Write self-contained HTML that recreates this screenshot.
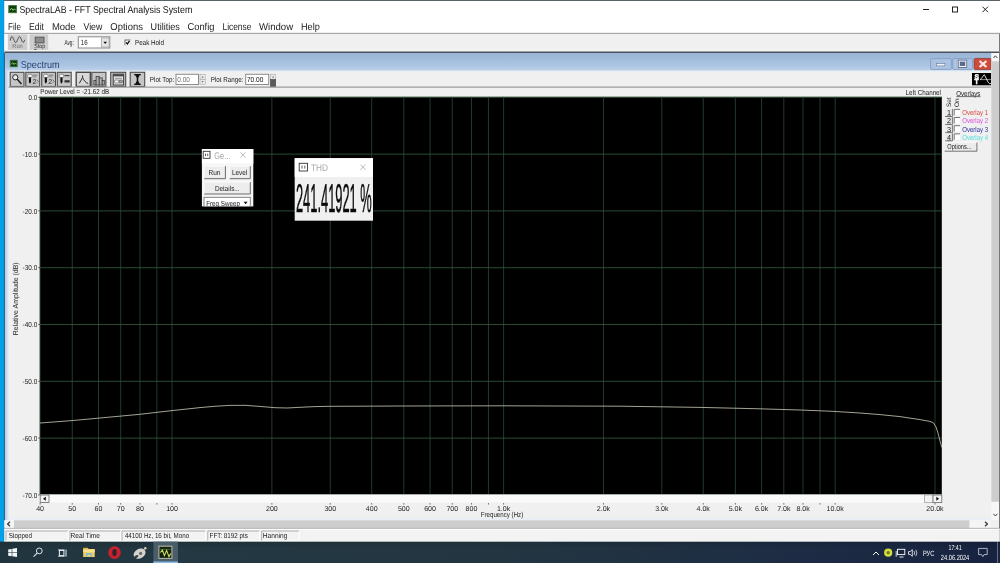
<!DOCTYPE html>
<html lang="en"><head><meta charset="utf-8"><title>SpectraLAB - FFT Spectral Analysis System</title>
<style>
html,body{margin:0;padding:0;background:#f0f0f0;overflow:hidden}
svg{display:block;will-change:transform;font-family:'Liberation Sans', sans-serif;}
text{white-space:pre;text-rendering:geometricPrecision}
</style></head><body>
<svg width="1000" height="563" viewBox="0 0 1000 563" font-family="Liberation Sans, sans-serif">
<defs>
<linearGradient id="tb" x1="0" y1="0" x2="0" y2="1"><stop offset="0" stop-color="#9bb4d3"/><stop offset="0.3" stop-color="#a0badb"/><stop offset="0.7" stop-color="#acc5e3"/><stop offset="1" stop-color="#bdd2ea"/></linearGradient>
<linearGradient id="task" x1="0" y1="0" x2="1" y2="0"><stop offset="0" stop-color="#21353f"/><stop offset="0.2" stop-color="#233842"/><stop offset="0.5" stop-color="#233541"/><stop offset="0.8" stop-color="#1d2c44"/><stop offset="1" stop-color="#172240"/></linearGradient>
<linearGradient id="taskv" x1="0" y1="0" x2="0" y2="1"><stop offset="0" stop-color="#000" stop-opacity="0.13"/><stop offset="0.35" stop-color="#000" stop-opacity="0"/></linearGradient>
</defs>
<rect x="0.00" y="0.00" width="1000.00" height="563.00" fill="#f0f0f0" />
<rect x="0.00" y="0.00" width="4.40" height="542.00" fill="#1583c4" />
<rect x="0.00" y="0.00" width="3.70" height="542.00" fill="#03a1e7" />
<rect x="4.50" y="0.00" width="995.50" height="33.00" fill="#ffffff" />
<line x1="4.00" y1="0.50" x2="1000.00" y2="0.50" stroke="#5a6468" stroke-width="1" />
<rect x="8.80" y="5.60" width="7.60" height="7.10" fill="#0e3a0e" stroke="#3f7a3a" stroke-width="1" />
<path d="M9.8 10.2 L11.6 8.2 L13 10.4 L14.4 8.8 L15.6 10.2" stroke="#9ee07a" fill="none" stroke-width="0.9" />
<text x="19.40" y="13.10" font-size="10" fill="#111" font-weight="normal" text-anchor="start" textLength="172.90" lengthAdjust="spacingAndGlyphs" >SpectraLAB - FFT Spectral Analysis System</text>
<line x1="923.00" y1="9.50" x2="929.00" y2="9.50" stroke="#222" stroke-width="1" />
<rect x="952.50" y="7.00" width="5.00" height="5.00" fill="none" stroke="#222" stroke-width="1" />
<path d="M982.5 6.7 L988 12.2 M988 6.7 L982.5 12.2" stroke="#222" fill="none" stroke-width="1" />
<text x="8.10" y="29.60" font-size="10" fill="#1a1a1a" font-weight="normal" text-anchor="start" textLength="12.90" lengthAdjust="spacingAndGlyphs" >File</text>
<text x="29.00" y="29.60" font-size="10" fill="#1a1a1a" font-weight="normal" text-anchor="start" textLength="15.00" lengthAdjust="spacingAndGlyphs" >Edit</text>
<text x="51.90" y="29.60" font-size="10" fill="#1a1a1a" font-weight="normal" text-anchor="start" textLength="23.70" lengthAdjust="spacingAndGlyphs" >Mode</text>
<text x="83.50" y="29.60" font-size="10" fill="#1a1a1a" font-weight="normal" text-anchor="start" textLength="18.80" lengthAdjust="spacingAndGlyphs" >View</text>
<text x="110.30" y="29.60" font-size="10" fill="#1a1a1a" font-weight="normal" text-anchor="start" textLength="32.60" lengthAdjust="spacingAndGlyphs" >Options</text>
<text x="150.60" y="29.60" font-size="10" fill="#1a1a1a" font-weight="normal" text-anchor="start" textLength="29.20" lengthAdjust="spacingAndGlyphs" >Utilities</text>
<text x="187.50" y="29.60" font-size="10" fill="#1a1a1a" font-weight="normal" text-anchor="start" textLength="26.90" lengthAdjust="spacingAndGlyphs" >Config</text>
<text x="222.50" y="29.60" font-size="10" fill="#1a1a1a" font-weight="normal" text-anchor="start" textLength="28.80" lengthAdjust="spacingAndGlyphs" >License</text>
<text x="259.00" y="29.60" font-size="10" fill="#1a1a1a" font-weight="normal" text-anchor="start" textLength="34.10" lengthAdjust="spacingAndGlyphs" >Window</text>
<text x="301.00" y="29.60" font-size="10" fill="#1a1a1a" font-weight="normal" text-anchor="start" textLength="18.80" lengthAdjust="spacingAndGlyphs" >Help</text>
<rect x="4.50" y="32.85" width="995.50" height="1.05" fill="#8c8c8c" />
<rect x="4.50" y="33.80" width="995.00" height="18.00" fill="#f0f0f0" />
<rect x="4.50" y="34.00" width="3.40" height="16.30" fill="#f9f9f9" />
<rect x="7.90" y="34.40" width="19.50" height="15.50" fill="#cdcdcd" />
<path d="M10.2 40.6 C10.8 38 11.2 36.6 11.9 36.6 C13.2 36.6 14.4 42.6 15.7 42.6 C17 42.6 18.3 36.6 19.6 36.6 C20.9 36.6 21.9 42.4 23 42.4 C23.8 42.4 24.3 41 24.8 39.8" stroke="#3a3a3a" fill="none" stroke-width="0.9" />
<text x="12.30" y="48.10" font-size="6" fill="#6e6e6e" font-weight="normal" text-anchor="start" textLength="10.40" lengthAdjust="spacingAndGlyphs" >Run</text>
<rect x="29.50" y="34.40" width="18.70" height="15.50" fill="#cdcdcd" />
<rect x="35.20" y="37.20" width="8.80" height="5.70" fill="#8c8c8c" stroke="#505050" stroke-width="0.9" />
<text x="34.20" y="48.20" font-size="6" fill="#2a2a2a" font-weight="normal" text-anchor="start" textLength="10.90" lengthAdjust="spacingAndGlyphs" >Stop</text>
<line x1="34.20" y1="49.40" x2="36.60" y2="49.40" stroke="#222" stroke-width="0.7" />
<rect x="4.50" y="50.30" width="995.00" height="1.00" fill="#f5f5f5" />
<text x="64.40" y="45.30" font-size="7.3" fill="#222" font-weight="normal" text-anchor="start" textLength="9.40" lengthAdjust="spacingAndGlyphs" >Avg:</text>
<rect x="78.30" y="36.80" width="31.50" height="11.20" fill="#ffffff" stroke="#8a8a8a" stroke-width="1" />
<text x="80.80" y="45.40" font-size="7.5" fill="#222" font-weight="normal" text-anchor="start" textLength="6.80" lengthAdjust="spacingAndGlyphs" >16</text>
<rect x="101.30" y="38.00" width="7.80" height="9.00" fill="#e6e6e6" stroke="#9a9a9a" stroke-width="0.7" />
<path d="M103.4 41.8 L107 41.8 L105.2 44 Z" stroke="none" fill="#111" stroke-width="1" />
<rect x="124.80" y="39.80" width="5.60" height="5.40" fill="#ffffff" />
<line x1="124.80" y1="40.00" x2="130.40" y2="40.00" stroke="#6a6a6a" stroke-width="1" />
<line x1="125.00" y1="39.80" x2="125.00" y2="45.20" stroke="#6a6a6a" stroke-width="1" />
<line x1="124.80" y1="45.10" x2="130.40" y2="45.10" stroke="#dcdcdc" stroke-width="0.6" />
<line x1="130.30" y1="39.80" x2="130.30" y2="45.20" stroke="#dcdcdc" stroke-width="0.6" />
<path d="M126.1 42.3 L127.4 43.9 L129.5 40.9" stroke="#0a0a0a" fill="none" stroke-width="1.25" />
<text x="135.00" y="45.30" font-size="7.3" fill="#222" font-weight="normal" text-anchor="start" textLength="29.00" lengthAdjust="spacingAndGlyphs" >Peak Hold</text>
<rect x="4.50" y="51.50" width="995.50" height="1.50" fill="#4a545c" />
<rect x="4.50" y="53.00" width="987.00" height="17.80" fill="url(#tb)" />
<rect x="4.50" y="70.80" width="987.00" height="449.50" fill="#f0f0f0" />
<rect x="8.50" y="70.80" width="983.00" height="1.20" fill="#e6eef6" />
<rect x="8.50" y="517.40" width="983.00" height="2.90" fill="#ebeff5" />
<linearGradient id="lb" x1="0" y1="0" x2="1" y2="0"><stop offset="0" stop-color="#a9c8e2"/><stop offset="1" stop-color="#e6ebf6"/></linearGradient>
<rect x="4.50" y="70.80" width="4.30" height="449.50" fill="url(#lb)" />
<rect x="3.90" y="53.00" width="1.00" height="467.30" fill="#245a80" />
<rect x="10.20" y="60.20" width="7.00" height="6.60" fill="#0e3a0e" stroke="#3f7a3a" stroke-width="0.8" />
<path d="M11 64.5 L12.8 62.5 L14 64.6 L15.3 63 L16.5 64.3" stroke="#9ee07a" fill="none" stroke-width="0.8" />
<text x="20.70" y="67.70" font-size="10" fill="#27406f" font-weight="normal" text-anchor="start" textLength="39.00" lengthAdjust="spacingAndGlyphs" >Spectrum</text>
<rect x="930.60" y="58.60" width="20.80" height="10.80" fill="#abc2e2" stroke="#7f99bf" stroke-width="0.8" rx="1.2"/>
<rect x="936.30" y="63.70" width="8.60" height="2.20" fill="#eef3fb" stroke="#5c6e8c" stroke-width="0.5" />
<rect x="952.60" y="58.60" width="20.00" height="10.80" fill="#abc2e2" stroke="#7f99bf" stroke-width="0.8" rx="1.2"/>
<rect x="958.20" y="60.10" width="8.60" height="7.40" fill="#54627e" stroke="#4e5c78" stroke-width="0.6" />
<rect x="959.20" y="61.10" width="6.60" height="5.40" fill="#5a6a8a" stroke="#f2f6fc" stroke-width="1.1" />
<rect x="974.20" y="58.40" width="17.00" height="11.20" fill="#d04a3b" stroke="#86382f" stroke-width="0.8" rx="1.2"/>
<path d="M979.6 61 L986.4 67 M986.4 61 L979.6 67" stroke="#fbe9e6" fill="none" stroke-width="2.3" />
<rect x="10.20" y="72.30" width="13.80" height="14.20" fill="#c6c6c6" stroke="#4a4a4a" stroke-width="1.1" />
<rect x="25.80" y="72.30" width="13.90" height="14.20" fill="#c6c6c6" stroke="#4a4a4a" stroke-width="1.1" />
<rect x="41.70" y="72.30" width="13.80" height="14.20" fill="#c6c6c6" stroke="#4a4a4a" stroke-width="1.1" />
<rect x="57.30" y="72.30" width="13.90" height="14.20" fill="#c6c6c6" stroke="#4a4a4a" stroke-width="1.1" />
<rect x="76.20" y="72.30" width="14.10" height="14.20" fill="#d9d9d9" stroke="#4a4a4a" stroke-width="1.4" />
<rect x="91.80" y="72.30" width="14.10" height="14.20" fill="#c6c6c6" stroke="#4a4a4a" stroke-width="1.1" />
<rect x="110.70" y="72.30" width="15.00" height="14.20" fill="#c6c6c6" stroke="#4a4a4a" stroke-width="1.1" />
<rect x="130.20" y="72.30" width="14.50" height="14.20" fill="#c6c6c6" stroke="#4a4a4a" stroke-width="1.1" />
<circle cx="15.3" cy="77.3" r="2.6" fill="#eee" stroke="#222" stroke-width="1"/>
<line x1="17.20" y1="79.30" x2="21.50" y2="84.00" stroke="#222" stroke-width="1.5" />
<rect x="27.70" y="74.20" width="4.50" height="3.30" fill="#f4f4f4" stroke="#555" stroke-width="0.6" rx="1"/>
<path d="M28.9 77.6 H31.0 V82 L30.0 83.8 L28.9 82 Z" stroke="none" fill="#0c0c0c" stroke-width="1" />
<text x="32.40" y="83.80" font-size="7" fill="#2e2e2e" font-weight="normal" text-anchor="start" >2</text>
<path d="M36.7 79.6 L38.4 81.3 L36.7 83" stroke="#555" fill="none" stroke-width="0.7" />
<line x1="33.20" y1="75.20" x2="37.40" y2="75.20" stroke="#666" stroke-width="0.8" />
<line x1="33.20" y1="76.80" x2="36.40" y2="76.80" stroke="#777" stroke-width="0.7" />
<rect x="43.60" y="74.20" width="4.50" height="3.30" fill="#f4f4f4" stroke="#555" stroke-width="0.6" rx="1"/>
<path d="M44.8 77.6 H46.9 V82 L45.9 83.8 L44.8 82 Z" stroke="none" fill="#0c0c0c" stroke-width="1" />
<text x="48.30" y="83.80" font-size="7" fill="#2e2e2e" font-weight="normal" text-anchor="start" >2</text>
<path d="M52.6 79.6 L54.3 81.3 L52.6 83" stroke="#555" fill="none" stroke-width="0.7" />
<line x1="49.10" y1="75.20" x2="53.30" y2="75.20" stroke="#666" stroke-width="0.8" />
<line x1="49.10" y1="76.80" x2="52.30" y2="76.80" stroke="#777" stroke-width="0.7" />
<rect x="59.20" y="74.20" width="4.50" height="3.30" fill="#f4f4f4" stroke="#555" stroke-width="0.6" rx="1"/>
<path d="M60.4 77.6 H62.5 V82 L61.4 83.8 L60.4 82 Z" stroke="none" fill="#0c0c0c" stroke-width="1" />
<line x1="64.50" y1="75.60" x2="69.50" y2="75.60" stroke="#444" stroke-width="1.3" />
<rect x="64.50" y="80.20" width="5.20" height="2.30" fill="#333" />
<path d="M79.3 83.3 L82.6 77.6 L82.6 75.4 M82.6 77.6 C84 80.6 85.6 82.8 88.2 83.5" stroke="#2a2a2a" fill="none" stroke-width="1" />
<rect x="93.90" y="80.40" width="2.20" height="4.60" fill="#b4b4b4" stroke="#3a3a3a" stroke-width="0.8" />
<rect x="96.10" y="76.40" width="3.10" height="8.60" fill="#b4b4b4" stroke="#3a3a3a" stroke-width="0.8" />
<rect x="99.20" y="77.90" width="3.00" height="7.10" fill="#b4b4b4" stroke="#3a3a3a" stroke-width="0.8" />
<rect x="102.20" y="80.40" width="2.10" height="4.60" fill="#b4b4b4" stroke="#3a3a3a" stroke-width="0.8" />
<rect x="113.20" y="74.20" width="10.40" height="10.80" fill="#ececec" stroke="#3a3a3a" stroke-width="1" />
<rect x="113.20" y="74.20" width="10.40" height="2.20" fill="#4a4a4a" />
<line x1="114.80" y1="78.30" x2="122.00" y2="78.30" stroke="#666" stroke-width="0.7" />
<rect x="114.80" y="80.00" width="3.40" height="3.00" fill="#fafafa" stroke="#555" stroke-width="0.6" />
<rect x="119.40" y="80.00" width="2.80" height="3.00" fill="#9a9a9a" stroke="#555" stroke-width="0.5" />
<path d="M134.2 74.7 H140.8 M134.2 84.3 H140.8" stroke="#111" fill="none" stroke-width="1.2" />
<path d="M135.2 75 L139.8 75 L138.3 78 L138.3 81 L139.8 84 L135.2 84 L136.7 81 L136.7 78 Z" stroke="none" fill="#111" stroke-width="1" />
<text x="149.80" y="81.50" font-size="7.3" fill="#222" font-weight="normal" text-anchor="start" textLength="24.40" lengthAdjust="spacingAndGlyphs" >Plot Top:</text>
<rect x="176.00" y="74.30" width="22.50" height="10.20" fill="#ffffff" stroke="#8c8c8c" stroke-width="1" />
<text x="177.30" y="81.70" font-size="7.3" fill="#707070" font-weight="normal" text-anchor="start" textLength="12.50" lengthAdjust="spacingAndGlyphs" >0.00</text>
<rect x="200.00" y="74.60" width="5.20" height="4.60" fill="#ececec" stroke="#aaa" stroke-width="0.6" />
<rect x="200.00" y="79.60" width="5.20" height="4.60" fill="#ececec" stroke="#aaa" stroke-width="0.6" />
<path d="M201.6 77.6 L202.6 76.2 L203.6 77.6 Z" stroke="none" fill="#333" stroke-width="1" />
<path d="M201.6 81.2 L202.6 82.6 L203.6 81.2 Z" stroke="none" fill="#333" stroke-width="1" />
<text x="210.80" y="81.50" font-size="7.3" fill="#222" font-weight="normal" text-anchor="start" textLength="32.70" lengthAdjust="spacingAndGlyphs" >Plot Range:</text>
<rect x="245.70" y="74.30" width="23.00" height="10.20" fill="#ffffff" stroke="#8c8c8c" stroke-width="1" />
<text x="247.00" y="81.70" font-size="7.3" fill="#111" font-weight="normal" text-anchor="start" textLength="16.30" lengthAdjust="spacingAndGlyphs" >70.00</text>
<rect x="270.50" y="74.60" width="5.20" height="4.60" fill="#ececec" stroke="#aaa" stroke-width="0.6" />
<rect x="270.50" y="79.60" width="5.20" height="7.20" fill="#5a5a5a" stroke="#444" stroke-width="0.6" />
<path d="M272.1 77.6 L273.1 76.2 L274.1 77.6 Z" stroke="none" fill="#333" stroke-width="1" />
<rect x="972.00" y="73.00" width="19.30" height="12.30" fill="#000" />
<text x="974.40" y="79.10" font-size="6.8" fill="#fff" font-weight="bold" text-anchor="start" stroke="#fff" stroke-width="0.45">S</text>
<text x="974.60" y="84.00" font-size="6.8" fill="#fff" font-weight="bold" text-anchor="start" stroke="#fff" stroke-width="0.45">T</text>
<line x1="980.00" y1="79.60" x2="991.30" y2="79.60" stroke="#e6e6e6" stroke-width="0.6" />
<path d="M980.3 79.8 L984.3 74.6 L988 82 Q989.5 85 991.3 83.2" stroke="#fff" fill="none" stroke-width="0.8" />
<line x1="8.50" y1="87.10" x2="991.00" y2="87.10" stroke="#9c9c9c" stroke-width="1.2" />
<text x="40.20" y="94.30" font-size="7.3" fill="#222" font-weight="normal" text-anchor="start" textLength="69.00" lengthAdjust="spacingAndGlyphs" >Power Level = -21.62 dB</text>
<text x="905.50" y="94.50" font-size="7.3" fill="#222" font-weight="normal" text-anchor="start" textLength="35.50" lengthAdjust="spacingAndGlyphs" >Left Channel</text>
<text x="956.30" y="95.60" font-size="7.3" fill="#222" font-weight="normal" text-anchor="start" textLength="24.10" lengthAdjust="spacingAndGlyphs" >Overlays</text>
<line x1="956.30" y1="96.60" x2="980.40" y2="96.60" stroke="#333" stroke-width="0.7" />
<rect x="39.80" y="96.90" width="902.00" height="397.60" fill="#000" />
<line x1="40.20" y1="96.90" x2="40.20" y2="494.50" stroke="#24482c" stroke-width="0.8" />
<line x1="72.25" y1="96.90" x2="72.25" y2="494.50" stroke="#2b4a32" stroke-width="0.8" />
<line x1="98.50" y1="96.90" x2="98.50" y2="494.50" stroke="#2b4a32" stroke-width="0.8" />
<line x1="120.70" y1="96.90" x2="120.70" y2="494.50" stroke="#2b4a32" stroke-width="0.8" />
<line x1="139.93" y1="96.90" x2="139.93" y2="494.50" stroke="#2b4a32" stroke-width="0.8" />
<line x1="156.89" y1="96.90" x2="156.89" y2="494.50" stroke="#2b4a32" stroke-width="0.8" />
<line x1="172.06" y1="96.90" x2="172.06" y2="494.50" stroke="#2b4a32" stroke-width="0.8" />
<line x1="271.87" y1="96.90" x2="271.87" y2="494.50" stroke="#2b4a32" stroke-width="0.8" />
<line x1="330.26" y1="96.90" x2="330.26" y2="494.50" stroke="#2b4a32" stroke-width="0.8" />
<line x1="371.68" y1="96.90" x2="371.68" y2="494.50" stroke="#2b4a32" stroke-width="0.8" />
<line x1="403.81" y1="96.90" x2="403.81" y2="494.50" stroke="#2b4a32" stroke-width="0.8" />
<line x1="430.06" y1="96.90" x2="430.06" y2="494.50" stroke="#2b4a32" stroke-width="0.8" />
<line x1="452.26" y1="96.90" x2="452.26" y2="494.50" stroke="#2b4a32" stroke-width="0.8" />
<line x1="471.49" y1="96.90" x2="471.49" y2="494.50" stroke="#2b4a32" stroke-width="0.8" />
<line x1="488.45" y1="96.90" x2="488.45" y2="494.50" stroke="#2b4a32" stroke-width="0.8" />
<line x1="503.62" y1="96.90" x2="503.62" y2="494.50" stroke="#2b4a32" stroke-width="0.8" />
<line x1="603.43" y1="96.90" x2="603.43" y2="494.50" stroke="#2b4a32" stroke-width="0.8" />
<line x1="661.82" y1="96.90" x2="661.82" y2="494.50" stroke="#2b4a32" stroke-width="0.8" />
<line x1="703.24" y1="96.90" x2="703.24" y2="494.50" stroke="#2b4a32" stroke-width="0.8" />
<line x1="735.37" y1="96.90" x2="735.37" y2="494.50" stroke="#2b4a32" stroke-width="0.8" />
<line x1="761.62" y1="96.90" x2="761.62" y2="494.50" stroke="#2b4a32" stroke-width="0.8" />
<line x1="783.82" y1="96.90" x2="783.82" y2="494.50" stroke="#2b4a32" stroke-width="0.8" />
<line x1="803.05" y1="96.90" x2="803.05" y2="494.50" stroke="#2b4a32" stroke-width="0.8" />
<line x1="820.01" y1="96.90" x2="820.01" y2="494.50" stroke="#2b4a32" stroke-width="0.8" />
<line x1="835.18" y1="96.90" x2="835.18" y2="494.50" stroke="#2b4a32" stroke-width="0.8" />
<line x1="934.99" y1="96.90" x2="934.99" y2="494.50" stroke="#2b4a32" stroke-width="0.8" />
<line x1="39.80" y1="97.30" x2="941.80" y2="97.30" stroke="#30523c" stroke-width="0.9" />
<line x1="39.80" y1="154.10" x2="941.80" y2="154.10" stroke="#30523c" stroke-width="0.9" />
<line x1="39.80" y1="210.90" x2="941.80" y2="210.90" stroke="#30523c" stroke-width="0.9" />
<line x1="39.80" y1="267.70" x2="941.80" y2="267.70" stroke="#30523c" stroke-width="0.9" />
<line x1="39.80" y1="324.50" x2="941.80" y2="324.50" stroke="#30523c" stroke-width="0.9" />
<line x1="39.80" y1="381.30" x2="941.80" y2="381.30" stroke="#30523c" stroke-width="0.9" />
<line x1="39.80" y1="438.10" x2="941.80" y2="438.10" stroke="#30523c" stroke-width="0.9" />
<line x1="39.80" y1="494.90" x2="941.80" y2="494.90" stroke="#30523c" stroke-width="0.9" />
<line x1="39.80" y1="97.40" x2="941.80" y2="97.40" stroke="#24452c" stroke-width="1" />
<path d="M40.0 423.0 L72.0 420.6 L100.0 418.0 L139.0 414.4 L172.0 410.6 L200.0 407.6 L216.0 406.2 L230.0 405.4 L245.0 405.3 L262.0 406.6 L275.0 407.7 L287.0 408.0 L300.0 407.3 L315.0 406.6 L330.0 406.3 L360.0 406.2 L400.0 406.0 L450.0 405.9 L503.0 405.8 L560.0 406.0 L620.0 406.2 L700.0 407.4 L760.0 408.8 L800.0 410.0 L830.0 411.2 L860.0 413.0 L880.0 414.6 L900.0 416.6 L920.0 419.6 L930.0 421.4 L933.5 423.0 L936.0 427.0 L938.0 433.0 L940.0 441.0 L941.8 447.5" stroke="#b6b6a6" fill="none" stroke-width="0.9" stroke-linejoin="round"/>
<text x="28.60" y="99.90" font-size="7.3" fill="#222" font-weight="normal" text-anchor="start" textLength="8.60" lengthAdjust="spacingAndGlyphs" >0.0</text>
<line x1="38.20" y1="97.30" x2="40.20" y2="97.30" stroke="#444" stroke-width="0.8" />
<text x="22.60" y="156.70" font-size="7.3" fill="#222" font-weight="normal" text-anchor="start" textLength="14.60" lengthAdjust="spacingAndGlyphs" >-10.0</text>
<line x1="38.20" y1="154.10" x2="40.20" y2="154.10" stroke="#444" stroke-width="0.8" />
<text x="22.60" y="213.50" font-size="7.3" fill="#222" font-weight="normal" text-anchor="start" textLength="14.60" lengthAdjust="spacingAndGlyphs" >-20.0</text>
<line x1="38.20" y1="210.90" x2="40.20" y2="210.90" stroke="#444" stroke-width="0.8" />
<text x="22.60" y="270.30" font-size="7.3" fill="#222" font-weight="normal" text-anchor="start" textLength="14.60" lengthAdjust="spacingAndGlyphs" >-30.0</text>
<line x1="38.20" y1="267.70" x2="40.20" y2="267.70" stroke="#444" stroke-width="0.8" />
<text x="22.60" y="327.10" font-size="7.3" fill="#222" font-weight="normal" text-anchor="start" textLength="14.60" lengthAdjust="spacingAndGlyphs" >-40.0</text>
<line x1="38.20" y1="324.50" x2="40.20" y2="324.50" stroke="#444" stroke-width="0.8" />
<text x="22.60" y="383.90" font-size="7.3" fill="#222" font-weight="normal" text-anchor="start" textLength="14.60" lengthAdjust="spacingAndGlyphs" >-50.0</text>
<line x1="38.20" y1="381.30" x2="40.20" y2="381.30" stroke="#444" stroke-width="0.8" />
<text x="22.60" y="440.70" font-size="7.3" fill="#222" font-weight="normal" text-anchor="start" textLength="14.60" lengthAdjust="spacingAndGlyphs" >-60.0</text>
<line x1="38.20" y1="438.10" x2="40.20" y2="438.10" stroke="#444" stroke-width="0.8" />
<text x="22.60" y="497.50" font-size="7.3" fill="#222" font-weight="normal" text-anchor="start" textLength="14.60" lengthAdjust="spacingAndGlyphs" >-70.0</text>
<line x1="38.20" y1="494.90" x2="40.20" y2="494.90" stroke="#444" stroke-width="0.8" />
<text transform="translate(17.6,298.8) rotate(-90)" font-size="7.3" fill="#222" text-anchor="middle" textLength="73" lengthAdjust="spacingAndGlyphs">Relative Amplitude (dB)</text>
<rect x="39.80" y="494.50" width="902.00" height="8.00" fill="#fafafa" />
<rect x="40.20" y="495.00" width="8.80" height="7.50" fill="#f4f4f4" stroke="#666" stroke-width="0.8" />
<path d="M45.8 496.8 L45.8 500.8 L43 498.8 Z" stroke="none" fill="#111" stroke-width="1" />
<rect x="924.50" y="495.00" width="8.50" height="7.50" fill="#f4f4f4" stroke="#999" stroke-width="0.7" />
<rect x="933.00" y="495.00" width="8.80" height="7.50" fill="#f4f4f4" stroke="#666" stroke-width="0.8" />
<path d="M936.3 496.8 L936.3 500.8 L939.1 498.8 Z" stroke="none" fill="#111" stroke-width="1" />
<text x="40.12" y="511.10" font-size="7.05" fill="#222" text-anchor="middle" >40</text>
<text x="72.25" y="511.10" font-size="7.05" fill="#222" text-anchor="middle" >50</text>
<text x="98.50" y="511.10" font-size="7.05" fill="#222" text-anchor="middle" >60</text>
<text x="120.70" y="511.10" font-size="7.05" fill="#222" text-anchor="middle" >70</text>
<text x="139.93" y="511.10" font-size="7.05" fill="#222" text-anchor="middle" >80</text>
<text x="172.06" y="511.10" font-size="7.05" fill="#222" text-anchor="middle" >100</text>
<text x="271.87" y="511.10" font-size="7.05" fill="#222" text-anchor="middle" >200</text>
<text x="330.26" y="511.10" font-size="7.05" fill="#222" text-anchor="middle" >300</text>
<text x="371.68" y="511.10" font-size="7.05" fill="#222" text-anchor="middle" >400</text>
<text x="403.81" y="511.10" font-size="7.05" fill="#222" text-anchor="middle" >500</text>
<text x="430.06" y="511.10" font-size="7.05" fill="#222" text-anchor="middle" >600</text>
<text x="452.26" y="511.10" font-size="7.05" fill="#222" text-anchor="middle" >700</text>
<text x="471.49" y="511.10" font-size="7.05" fill="#222" text-anchor="middle" >800</text>
<text x="503.62" y="511.10" font-size="7.05" fill="#222" text-anchor="middle" >1.0k</text>
<text x="603.43" y="511.10" font-size="7.05" fill="#222" text-anchor="middle" >2.0k</text>
<text x="661.82" y="511.10" font-size="7.05" fill="#222" text-anchor="middle" >3.0k</text>
<text x="703.24" y="511.10" font-size="7.05" fill="#222" text-anchor="middle" >4.0k</text>
<text x="735.37" y="511.10" font-size="7.05" fill="#222" text-anchor="middle" >5.0k</text>
<text x="761.62" y="511.10" font-size="7.05" fill="#222" text-anchor="middle" >6.0k</text>
<text x="783.82" y="511.10" font-size="7.05" fill="#222" text-anchor="middle" >7.0k</text>
<text x="803.05" y="511.10" font-size="7.05" fill="#222" text-anchor="middle" >8.0k</text>
<text x="835.18" y="511.10" font-size="7.05" fill="#222" text-anchor="middle" >10.0k</text>
<text x="934.99" y="511.10" font-size="7.05" fill="#222" text-anchor="middle" >20.0k</text>
<line x1="40.12" y1="503.00" x2="40.12" y2="504.60" stroke="#555" stroke-width="0.8" />
<line x1="72.25" y1="503.00" x2="72.25" y2="504.60" stroke="#555" stroke-width="0.8" />
<line x1="98.50" y1="503.00" x2="98.50" y2="504.60" stroke="#555" stroke-width="0.8" />
<line x1="120.70" y1="503.00" x2="120.70" y2="504.60" stroke="#555" stroke-width="0.8" />
<line x1="139.93" y1="503.00" x2="139.93" y2="504.60" stroke="#555" stroke-width="0.8" />
<line x1="156.89" y1="503.00" x2="156.89" y2="504.60" stroke="#555" stroke-width="0.8" />
<line x1="172.06" y1="503.00" x2="172.06" y2="504.60" stroke="#555" stroke-width="0.8" />
<line x1="271.87" y1="503.00" x2="271.87" y2="504.60" stroke="#555" stroke-width="0.8" />
<line x1="330.26" y1="503.00" x2="330.26" y2="504.60" stroke="#555" stroke-width="0.8" />
<line x1="371.68" y1="503.00" x2="371.68" y2="504.60" stroke="#555" stroke-width="0.8" />
<line x1="403.81" y1="503.00" x2="403.81" y2="504.60" stroke="#555" stroke-width="0.8" />
<line x1="430.06" y1="503.00" x2="430.06" y2="504.60" stroke="#555" stroke-width="0.8" />
<line x1="452.26" y1="503.00" x2="452.26" y2="504.60" stroke="#555" stroke-width="0.8" />
<line x1="471.49" y1="503.00" x2="471.49" y2="504.60" stroke="#555" stroke-width="0.8" />
<line x1="488.45" y1="503.00" x2="488.45" y2="504.60" stroke="#555" stroke-width="0.8" />
<line x1="503.62" y1="503.00" x2="503.62" y2="504.60" stroke="#555" stroke-width="0.8" />
<line x1="603.43" y1="503.00" x2="603.43" y2="504.60" stroke="#555" stroke-width="0.8" />
<line x1="661.82" y1="503.00" x2="661.82" y2="504.60" stroke="#555" stroke-width="0.8" />
<line x1="703.24" y1="503.00" x2="703.24" y2="504.60" stroke="#555" stroke-width="0.8" />
<line x1="735.37" y1="503.00" x2="735.37" y2="504.60" stroke="#555" stroke-width="0.8" />
<line x1="761.62" y1="503.00" x2="761.62" y2="504.60" stroke="#555" stroke-width="0.8" />
<line x1="783.82" y1="503.00" x2="783.82" y2="504.60" stroke="#555" stroke-width="0.8" />
<line x1="803.05" y1="503.00" x2="803.05" y2="504.60" stroke="#555" stroke-width="0.8" />
<line x1="820.01" y1="503.00" x2="820.01" y2="504.60" stroke="#555" stroke-width="0.8" />
<line x1="835.18" y1="503.00" x2="835.18" y2="504.60" stroke="#555" stroke-width="0.8" />
<line x1="934.99" y1="503.00" x2="934.99" y2="504.60" stroke="#555" stroke-width="0.8" />
<text x="502.00" y="516.50" font-size="7.3" fill="#222" text-anchor="middle" textLength="42.40" lengthAdjust="spacingAndGlyphs" >Frequency (Hz)</text>
<text transform="translate(951.3,107) rotate(-90)" font-size="6.4" fill="#222">Set</text>
<text transform="translate(959.3,107) rotate(-90)" font-size="6.4" fill="#222">On</text>
<rect x="945.00" y="108.90" width="7.20" height="7.40" fill="#ececec" />
<line x1="945.00" y1="116.50" x2="952.40" y2="116.50" stroke="#555" stroke-width="0.8" />
<line x1="952.40" y1="108.90" x2="952.40" y2="116.50" stroke="#555" stroke-width="0.8" />
<text x="947.00" y="115.20" font-size="7.3" fill="#222" font-weight="normal" text-anchor="start" >1</text>
<line x1="947.00" y1="115.80" x2="951.00" y2="115.80" stroke="#333" stroke-width="0.5" />
<rect x="954.20" y="109.40" width="5.80" height="6.00" fill="#ffffff" />
<line x1="954.20" y1="109.40" x2="960.00" y2="109.40" stroke="#666" stroke-width="0.9" />
<line x1="954.20" y1="109.40" x2="954.20" y2="115.40" stroke="#666" stroke-width="0.9" />
<text x="962.30" y="115.20" font-size="7.3" fill="#d8473f" font-weight="normal" text-anchor="start" textLength="25.70" lengthAdjust="spacingAndGlyphs" >Overlay 1</text>
<rect x="945.00" y="117.05" width="7.20" height="7.40" fill="#ececec" />
<line x1="945.00" y1="124.65" x2="952.40" y2="124.65" stroke="#555" stroke-width="0.8" />
<line x1="952.40" y1="117.05" x2="952.40" y2="124.65" stroke="#555" stroke-width="0.8" />
<text x="947.00" y="123.35" font-size="7.3" fill="#222" font-weight="normal" text-anchor="start" >2</text>
<line x1="947.00" y1="123.95" x2="951.00" y2="123.95" stroke="#333" stroke-width="0.5" />
<rect x="954.20" y="117.55" width="5.80" height="6.00" fill="#ffffff" />
<line x1="954.20" y1="117.55" x2="960.00" y2="117.55" stroke="#666" stroke-width="0.9" />
<line x1="954.20" y1="117.55" x2="954.20" y2="123.55" stroke="#666" stroke-width="0.9" />
<text x="962.30" y="123.35" font-size="7.3" fill="#d94fd9" font-weight="normal" text-anchor="start" textLength="25.70" lengthAdjust="spacingAndGlyphs" >Overlay 2</text>
<rect x="945.00" y="125.20" width="7.20" height="7.40" fill="#ececec" />
<line x1="945.00" y1="132.80" x2="952.40" y2="132.80" stroke="#555" stroke-width="0.8" />
<line x1="952.40" y1="125.20" x2="952.40" y2="132.80" stroke="#555" stroke-width="0.8" />
<text x="947.00" y="131.50" font-size="7.3" fill="#222" font-weight="normal" text-anchor="start" >3</text>
<line x1="947.00" y1="132.10" x2="951.00" y2="132.10" stroke="#333" stroke-width="0.5" />
<rect x="954.20" y="125.70" width="5.80" height="6.00" fill="#ffffff" />
<line x1="954.20" y1="125.70" x2="960.00" y2="125.70" stroke="#666" stroke-width="0.9" />
<line x1="954.20" y1="125.70" x2="954.20" y2="131.70" stroke="#666" stroke-width="0.9" />
<text x="962.30" y="131.50" font-size="7.3" fill="#2a2a9c" font-weight="normal" text-anchor="start" textLength="25.70" lengthAdjust="spacingAndGlyphs" >Overlay 3</text>
<rect x="945.00" y="133.35" width="7.20" height="7.40" fill="#ececec" />
<line x1="945.00" y1="140.95" x2="952.40" y2="140.95" stroke="#555" stroke-width="0.8" />
<line x1="952.40" y1="133.35" x2="952.40" y2="140.95" stroke="#555" stroke-width="0.8" />
<text x="947.00" y="139.65" font-size="7.3" fill="#222" font-weight="normal" text-anchor="start" >4</text>
<line x1="947.00" y1="140.25" x2="951.00" y2="140.25" stroke="#333" stroke-width="0.5" />
<rect x="954.20" y="133.85" width="5.80" height="6.00" fill="#ffffff" />
<line x1="954.20" y1="133.85" x2="960.00" y2="133.85" stroke="#666" stroke-width="0.9" />
<line x1="954.20" y1="133.85" x2="954.20" y2="139.85" stroke="#666" stroke-width="0.9" />
<text x="962.30" y="139.65" font-size="7.3" fill="#4fe0dc" font-weight="normal" text-anchor="start" textLength="25.70" lengthAdjust="spacingAndGlyphs" >Overlay 4</text>
<rect x="944.70" y="142.30" width="32.00" height="8.70" fill="#ececec" />
<line x1="944.70" y1="151.20" x2="977.00" y2="151.20" stroke="#666" stroke-width="0.9" />
<line x1="976.90" y1="142.30" x2="976.90" y2="151.20" stroke="#666" stroke-width="0.9" />
<line x1="944.70" y1="142.30" x2="976.70" y2="142.30" stroke="#fff" stroke-width="0.8" />
<text x="947.30" y="149.30" font-size="7.3" fill="#222" font-weight="normal" text-anchor="start" textLength="24.20" lengthAdjust="spacingAndGlyphs" >Options...</text>
<rect x="201.90" y="149.00" width="51.40" height="57.40" fill="#f5f5f5" />
<rect x="201.90" y="149.00" width="51.40" height="14.50" fill="#ffffff" />
<rect x="203.20" y="151.30" width="6.80" height="7.00" fill="#fff" stroke="#333" stroke-width="0.9" />
<line x1="205.50" y1="153.60" x2="205.50" y2="156.00" stroke="#333" stroke-width="0.8" />
<line x1="207.70" y1="153.60" x2="207.70" y2="156.00" stroke="#333" stroke-width="0.8" />
<text x="214.30" y="159.10" font-size="9.6" fill="#a4a4a4" font-weight="normal" text-anchor="start" textLength="16.00" lengthAdjust="spacingAndGlyphs" >Ge...</text>
<path d="M240.3 152.2 L245.7 157.8 M245.7 152.2 L240.3 157.8" stroke="#b0b0b0" fill="none" stroke-width="0.8" />
<rect x="204.00" y="166.00" width="21.40" height="12.70" fill="#ededed" />
<line x1="204.00" y1="178.70" x2="225.40" y2="178.70" stroke="#6a6a6a" stroke-width="1" />
<line x1="225.40" y1="166.00" x2="225.40" y2="178.70" stroke="#6a6a6a" stroke-width="1" />
<line x1="204.00" y1="166.00" x2="225.40" y2="166.00" stroke="#fff" stroke-width="0.8" />
<line x1="204.00" y1="166.00" x2="204.00" y2="178.70" stroke="#fff" stroke-width="0.8" />
<text x="208.50" y="174.80" font-size="7.3" fill="#222" font-weight="normal" text-anchor="start" textLength="12.00" lengthAdjust="spacingAndGlyphs" >Run</text>
<rect x="229.40" y="166.00" width="20.90" height="12.70" fill="#ededed" />
<line x1="229.40" y1="178.70" x2="250.30" y2="178.70" stroke="#6a6a6a" stroke-width="1" />
<line x1="250.30" y1="166.00" x2="250.30" y2="178.70" stroke="#6a6a6a" stroke-width="1" />
<line x1="229.40" y1="166.00" x2="250.30" y2="166.00" stroke="#fff" stroke-width="0.8" />
<line x1="229.40" y1="166.00" x2="229.40" y2="178.70" stroke="#fff" stroke-width="0.8" />
<text x="232.00" y="174.80" font-size="7.3" fill="#222" font-weight="normal" text-anchor="start" textLength="15.30" lengthAdjust="spacingAndGlyphs" >Level</text>
<rect x="204.00" y="182.00" width="46.30" height="12.00" fill="#ededed" />
<line x1="204.00" y1="194.00" x2="250.30" y2="194.00" stroke="#6a6a6a" stroke-width="1" />
<line x1="250.30" y1="182.00" x2="250.30" y2="194.00" stroke="#6a6a6a" stroke-width="1" />
<line x1="204.00" y1="182.00" x2="250.30" y2="182.00" stroke="#fff" stroke-width="0.8" />
<line x1="204.00" y1="182.00" x2="204.00" y2="194.00" stroke="#fff" stroke-width="0.8" />
<text x="215.00" y="190.50" font-size="7.3" fill="#222" font-weight="normal" text-anchor="start" textLength="24.60" lengthAdjust="spacingAndGlyphs" >Details...</text>
<rect x="204.00" y="197.30" width="46.30" height="9.10" fill="#ffffff" stroke="#777" stroke-width="0.9" />
<text x="206.20" y="205.70" font-size="7.3" fill="#222" font-weight="normal" text-anchor="start" textLength="33.80" lengthAdjust="spacingAndGlyphs" >Freq Sweep</text>
<path d="M243.6 201.8 L247.6 201.8 L245.6 204.2 Z" stroke="none" fill="#111" stroke-width="1" />
<rect x="294.70" y="158.20" width="78.30" height="62.50" fill="#f0f0f0" />
<rect x="294.70" y="158.20" width="78.30" height="18.80" fill="#ffffff" />
<rect x="299.20" y="163.30" width="8.30" height="7.70" fill="#fff" stroke="#333" stroke-width="0.9" />
<line x1="302.00" y1="165.60" x2="302.00" y2="168.60" stroke="#333" stroke-width="0.8" />
<line x1="304.80" y1="165.60" x2="304.80" y2="168.60" stroke="#333" stroke-width="0.8" />
<text x="311.00" y="171.00" font-size="9.6" fill="#a8a8a8" font-weight="normal" text-anchor="start" textLength="17.00" lengthAdjust="spacingAndGlyphs" >THD</text>
<path d="M360.3 164.6 L365.5 169.8 M365.5 164.6 L360.3 169.8" stroke="#a8a8a8" fill="none" stroke-width="0.8" />
<text transform="translate(295.9,212.35) scale(0.3205,1)" font-size="40.2" fill="#0a0a0a" stroke="#0a0a0a" stroke-width="0.5" vector-effect="non-scaling-stroke">241.41921 %</text>
<rect x="991.30" y="53.00" width="8.00" height="467.30" fill="#f7f7f7" />
<rect x="991.30" y="61.30" width="8.00" height="440.50" fill="#cdcdcd" />
<path d="M993.4 58 L995.4 55.8 L997.4 58" stroke="#444" fill="none" stroke-width="1" />
<path d="M993.4 513.8 L995.4 516 L997.4 513.8" stroke="#444" fill="none" stroke-width="1" />
<rect x="4.50" y="520.30" width="987.00" height="7.60" fill="#f5f5f5" />
<rect x="14.00" y="520.30" width="955.40" height="7.60" fill="#cdcdcd" />
<path d="M10 521.8 L7.6 524 L10 526.2" stroke="#3a3a3a" fill="none" stroke-width="1.3" />
<path d="M985 521.8 L987.4 524 L985 526.2" stroke="#3a3a3a" fill="none" stroke-width="1.3" />
<rect x="991.30" y="520.30" width="8.00" height="7.60" fill="#f0f0f0" />
<rect x="4.50" y="527.90" width="995.00" height="0.90" fill="#8a8a8a" />
<rect x="4.50" y="528.80" width="995.50" height="13.00" fill="#f3f3f3" />
<rect x="4.50" y="528.80" width="995.50" height="1.20" fill="#fcfcfc" />
<rect x="4.50" y="540.70" width="995.50" height="1.00" fill="#fbfbfb" />
<line x1="6.00" y1="531.00" x2="68.00" y2="531.00" stroke="#a0a0a0" stroke-width="0.8" />
<line x1="6.00" y1="531.00" x2="6.00" y2="540.60" stroke="#a0a0a0" stroke-width="0.8" />
<line x1="6.00" y1="540.80" x2="68.00" y2="540.80" stroke="#fff" stroke-width="0.8" />
<line x1="68.00" y1="531.00" x2="68.00" y2="540.80" stroke="#fff" stroke-width="0.8" />
<text x="8.70" y="537.90" font-size="7.3" fill="#222" font-weight="normal" text-anchor="start" textLength="23.30" lengthAdjust="spacingAndGlyphs" >Stopped</text>
<line x1="70.00" y1="531.00" x2="120.50" y2="531.00" stroke="#a0a0a0" stroke-width="0.8" />
<line x1="70.00" y1="531.00" x2="70.00" y2="540.60" stroke="#a0a0a0" stroke-width="0.8" />
<line x1="70.00" y1="540.80" x2="120.50" y2="540.80" stroke="#fff" stroke-width="0.8" />
<line x1="120.50" y1="531.00" x2="120.50" y2="540.80" stroke="#fff" stroke-width="0.8" />
<text x="70.60" y="537.90" font-size="7.3" fill="#222" font-weight="normal" text-anchor="start" textLength="29.30" lengthAdjust="spacingAndGlyphs" >Real Time</text>
<line x1="122.00" y1="531.00" x2="205.50" y2="531.00" stroke="#a0a0a0" stroke-width="0.8" />
<line x1="122.00" y1="531.00" x2="122.00" y2="540.60" stroke="#a0a0a0" stroke-width="0.8" />
<line x1="122.00" y1="540.80" x2="205.50" y2="540.80" stroke="#fff" stroke-width="0.8" />
<line x1="205.50" y1="531.00" x2="205.50" y2="540.80" stroke="#fff" stroke-width="0.8" />
<text x="124.90" y="537.90" font-size="7.3" fill="#222" font-weight="normal" text-anchor="start" textLength="64.20" lengthAdjust="spacingAndGlyphs" >44100 Hz, 16 bit, Mono</text>
<line x1="207.80" y1="531.00" x2="259.50" y2="531.00" stroke="#a0a0a0" stroke-width="0.8" />
<line x1="207.80" y1="531.00" x2="207.80" y2="540.60" stroke="#a0a0a0" stroke-width="0.8" />
<line x1="207.80" y1="540.80" x2="259.50" y2="540.80" stroke="#fff" stroke-width="0.8" />
<line x1="259.50" y1="531.00" x2="259.50" y2="540.80" stroke="#fff" stroke-width="0.8" />
<text x="209.60" y="537.90" font-size="7.3" fill="#222" font-weight="normal" text-anchor="start" textLength="38.30" lengthAdjust="spacingAndGlyphs" >FFT: 8192 pts</text>
<line x1="261.70" y1="531.00" x2="299.00" y2="531.00" stroke="#a0a0a0" stroke-width="0.8" />
<line x1="261.70" y1="531.00" x2="261.70" y2="540.60" stroke="#a0a0a0" stroke-width="0.8" />
<line x1="261.70" y1="540.80" x2="299.00" y2="540.80" stroke="#fff" stroke-width="0.8" />
<line x1="299.00" y1="531.00" x2="299.00" y2="540.80" stroke="#fff" stroke-width="0.8" />
<text x="262.80" y="537.90" font-size="7.3" fill="#222" font-weight="normal" text-anchor="start" textLength="24.70" lengthAdjust="spacingAndGlyphs" >Hanning</text>
<rect x="999.00" y="33.90" width="1.00" height="494.50" fill="#787878" />
<rect x="999.00" y="528.80" width="1.00" height="13.00" fill="#cfcfcf" />
<rect x="0.00" y="541.70" width="1000.00" height="21.30" fill="url(#task)" />
<rect x="0.00" y="541.70" width="1000.00" height="21.30" fill="url(#taskv)" />
<polygon points="8.2,549.4 11.7,548.9 11.7,552.2 8.2,552.2" fill="#f4f8fb"/>
<polygon points="12.3,548.8 17,548 17,552.2 12.3,552.2" fill="#f4f8fb"/>
<polygon points="8.2,552.8 11.7,552.8 11.7,556.2 8.2,555.7" fill="#f4f8fb"/>
<polygon points="12.3,552.8 17,552.8 17,557.1 12.3,556.3" fill="#f4f8fb"/>
<circle cx="39.3" cy="550.9" r="2.9" fill="none" stroke="#e4ecf2" stroke-width="0.95"/>
<line x1="37.20" y1="553.10" x2="33.60" y2="556.60" stroke="#e4ecf2" stroke-width="1.05" />
<rect x="59.40" y="550.40" width="4.50" height="5.30" fill="none" stroke="#eef3f7" stroke-width="1.0" />
<line x1="58.00" y1="549.90" x2="64.60" y2="549.90" stroke="#eef3f7" stroke-width="0.8" />
<line x1="58.00" y1="556.20" x2="64.60" y2="556.20" stroke="#eef3f7" stroke-width="0.8" />
<line x1="66.00" y1="549.60" x2="66.00" y2="556.60" stroke="#eef3f7" stroke-width="1.0" />
<rect x="83.20" y="549.00" width="11.50" height="8.00" fill="#f3d25e" />
<rect x="83.20" y="547.80" width="5.00" height="2.00" fill="#e3b944" />
<rect x="83.20" y="549.60" width="11.50" height="2.60" fill="#f8e290" />
<rect x="85.80" y="553.00" width="6.30" height="3.60" fill="#86b9d6" />
<rect x="87.30" y="554.60" width="3.30" height="2.00" fill="#f3d25e" />
<ellipse cx="114.5" cy="552.6" rx="6.3" ry="6.3" fill="#c9222e"/>
<ellipse cx="114.5" cy="552.6" rx="2.2" ry="3.7" fill="#33222c"/>
<ellipse cx="139.6" cy="553.6" rx="6.3" ry="4.7" fill="#d4d4cc" transform="rotate(-28 139.6 553.6)"/>
<ellipse cx="136.4" cy="556.6" rx="2.2" ry="1.3" fill="#2a3c46" transform="rotate(-28 136.4 556.6)"/>
<circle cx="140.6" cy="553.4" r="1.6" fill="#6a6a78"/>
<circle cx="145.3" cy="548.2" r="1.2" fill="#ddd2b4"/>
<line x1="142.50" y1="551.00" x2="145.00" y2="548.60" stroke="#c8c0a8" stroke-width="0.9" />
<rect x="153.40" y="541.70" width="24.50" height="21.30" fill="#4a5d6a" />
<rect x="153.40" y="561.50" width="24.50" height="1.50" fill="#86b9e6" />
<rect x="158.90" y="546.20" width="13.00" height="12.20" fill="#12220e" stroke="#b4b4a2" stroke-width="1.1" />
<line x1="160.00" y1="549.30" x2="171.00" y2="549.30" stroke="#4e7a3a" stroke-width="0.7" />
<path d="M160.4 552.5 L162.4 550 L164.4 555.6 L166.6 550.4 L169 556.6 L170.8 553.4" stroke="#cfe25e" fill="none" stroke-width="1.1" />
<path d="M873 555 L876 552 L879 555" stroke="#fff" fill="none" stroke-width="1" />
<circle cx="888.2" cy="552.7" r="4.1" fill="#d2dc3c"/>
<circle cx="888.2" cy="552.7" r="1.6" fill="#6a7a18"/>
<rect x="897.50" y="549.30" width="7.30" height="5.30" fill="none" stroke="#fff" stroke-width="0.9" />
<line x1="899.50" y1="557.00" x2="903.50" y2="557.00" stroke="#fff" stroke-width="0.9" />
<line x1="896.20" y1="551.00" x2="896.20" y2="556.80" stroke="#fff" stroke-width="0.8" />
<path d="M908.5 551.6 H910.2 L912.3 549.6 V556.4 L910.2 554.4 H908.5 Z" stroke="#fff" fill="none" stroke-width="0.8" />
<path d="M914 551 Q915.4 553 914 555 M915.8 549.8 Q918 553 915.8 556.2" stroke="#fff" fill="none" stroke-width="0.7" />
<text x="922.90" y="555.80" font-size="7.6" fill="#fff" font-weight="normal" text-anchor="start" textLength="11.50" lengthAdjust="spacingAndGlyphs" >РУС</text>
<text x="948.50" y="550.30" font-size="7.4" fill="#fff" font-weight="normal" text-anchor="start" textLength="13.10" lengthAdjust="spacingAndGlyphs" >17:41</text>
<text x="940.80" y="559.90" font-size="7.4" fill="#fff" font-weight="normal" text-anchor="start" textLength="28.50" lengthAdjust="spacingAndGlyphs" >24.06.2024</text>
<path d="M978.6 548.4 H987.2 V554.6 H984 L982.8 556.6 L981.6 554.6 H978.6 Z" stroke="#c6ccd8" fill="none" stroke-width="0.85" />
<line x1="997.50" y1="542.00" x2="997.50" y2="563.00" stroke="#7a8398" stroke-width="0.8" />
</svg>
</body></html>
